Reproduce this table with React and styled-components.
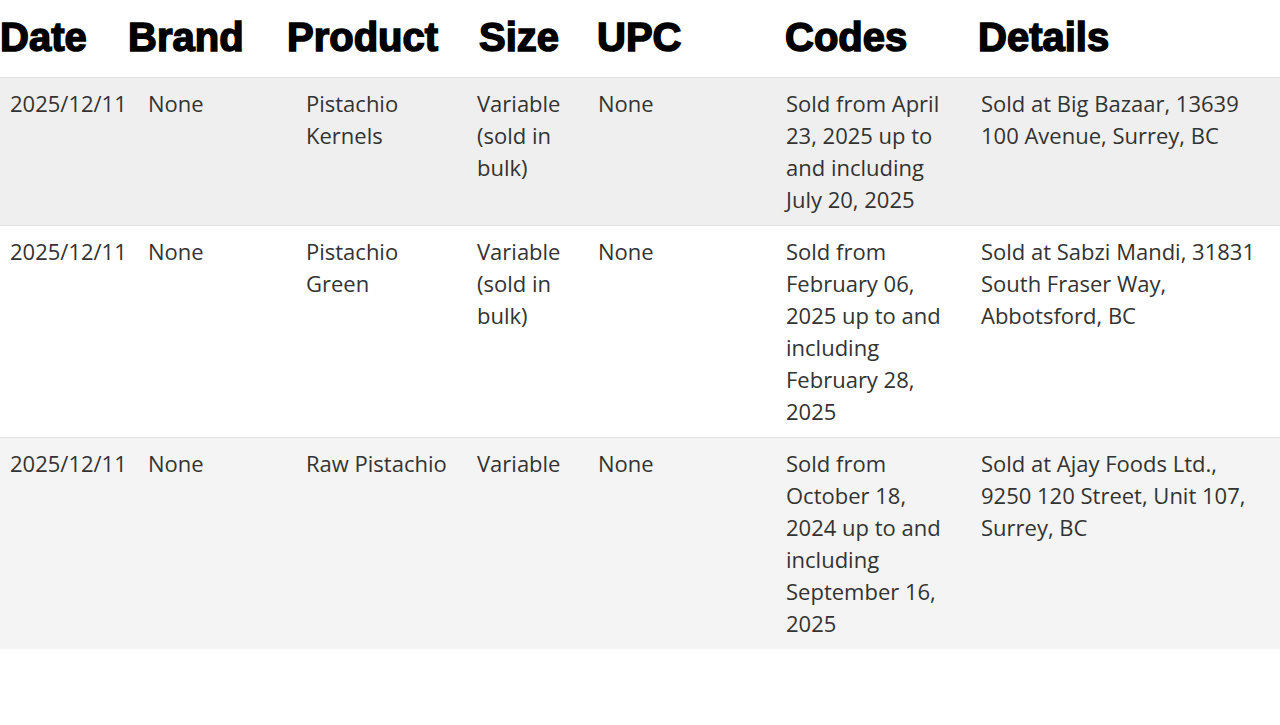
import React from 'react';
import styled, { createGlobalStyle } from 'styled-components';

const GlobalStyle = createGlobalStyle`
  html, body {
    margin: 0;
    padding: 0;
    background: #fff;
  }
`;

const Page = styled.div`
  width: 1280px;
  font-family: "Open Sans", "Noto Sans", sans-serif;
`;

const HeadRow = styled.div`
  display: grid;
  grid-template-columns: 128px 159px 192px 118px 188px 193px 1fr;
  padding: 14px 0 17px;
`;

const HeadCell = styled.div`
  font-family: "Liberation Sans", Arial, sans-serif;
  font-weight: 700;
  font-size: 40px;
  line-height: 46px;
  color: #000;
  -webkit-text-stroke: 1.5px #000;
  white-space: nowrap;
`;

const Row = styled.div`
  display: grid;
  grid-template-columns: 138px 158px 171px 121px 188px 195px 1fr;
  border-top: 1px solid #e2e2e2;
  background: ${(p) => p.$bg};
`;

const Cell = styled.div`
  padding: 9px 10px 10px;
  font-size: 22px;
  line-height: 32px;
  color: #333;
`;

const headers = ['Date', 'Brand', 'Product', 'Size', 'UPC', 'Codes', 'Details'];

const rows = [
  {
    bg: '#efefef',
    cells: [
      '2025/12/11',
      'None',
      'Pistachio Kernels',
      'Variable (sold in bulk)',
      'None',
      'Sold from April 23, 2025 up to and including July 20, 2025',
      'Sold at Big Bazaar, 13639 100 Avenue, Surrey, BC',
    ],
  },
  {
    bg: '#ffffff',
    cells: [
      '2025/12/11',
      'None',
      'Pistachio Green',
      'Variable (sold in bulk)',
      'None',
      'Sold from February 06, 2025 up to and including February 28, 2025',
      'Sold at Sabzi Mandi, 31831 South Fraser Way, Abbotsford, BC',
    ],
  },
  {
    bg: '#f4f4f4',
    cells: [
      '2025/12/11',
      'None',
      'Raw Pistachio',
      'Variable',
      'None',
      'Sold from October 18, 2024 up to and including September 16, 2025',
      'Sold at Ajay Foods Ltd., 9250 120 Street, Unit 107, Surrey, BC',
    ],
  },
];

function App() {
  return (
    <Page>
      <GlobalStyle />
      <HeadRow>
        {headers.map((h) => (
          <HeadCell key={h}>{h}</HeadCell>
        ))}
      </HeadRow>
      {rows.map((r, i) => (
        <Row key={i} $bg={r.bg}>
          {r.cells.map((c, j) => (
            <Cell key={j}>{c}</Cell>
          ))}
        </Row>
      ))}
    </Page>
  );
}

export default App;
